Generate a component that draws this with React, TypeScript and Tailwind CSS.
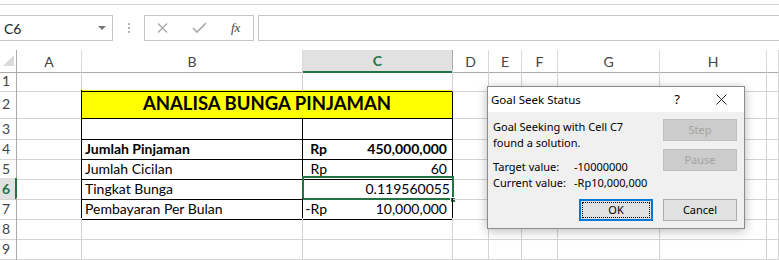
import React from "react";

const GRID =
  "grid grid-cols-[17px_65px_221px_150px_36px_33px_36px_102px_107px_1fr]";
const LETTERS = ["A", "B", "C", "D", "E", "F", "G", "H", ""];
const ROWS = [1, 2, 3, 4, 5, 6, 7, 8, 9, 10];

const sheetFont = { fontFamily: "Lato, 'Open Sans', sans-serif" };
const dlgFont = { fontFamily: "'Noto Sans', 'Open Sans', sans-serif" };

function FormulaBar() {
  return (
    <div className="pt-[4px] bg-white">
      <div className="h-[46px] border-t border-[#d4d4d4] pt-[10px] flex items-start">
        <div className="ml-[-1px] w-[114px] h-[26px] border border-[#c6c6c6] flex items-center pl-[4px] pr-[6px] text-[14px] text-[#222]" style={sheetFont}>
          <span className="flex-1">C6</span>
          <span className="w-0 h-0 border-l-[4px] border-r-[4px] border-t-[4px] border-l-transparent border-r-transparent border-t-[#777]" />
        </div>
        <div className="w-[31px] h-[26px] flex flex-col items-center justify-center gap-[2px]">
          <span className="w-[2px] h-[2px] bg-[#b5b5b5]" />
          <span className="w-[2px] h-[2px] bg-[#b5b5b5]" />
          <span className="w-[2px] h-[2px] bg-[#b5b5b5]" />
        </div>
        <div className="w-[110px] h-[26px] border border-[#c6c6c6] flex items-center">
          <svg width="110" height="24" viewBox="0 0 110 24">
            <path d="M13 7.5 L22 16.5 M22 7.5 L13 16.5" stroke="#a8a8a8" strokeWidth="1.3" fill="none" />
            <path d="M48 12 L52 16 L61 7" stroke="#a8a8a8" strokeWidth="1.6" fill="none" />
          </svg>
          <span className="-ml-[24px] text-[13px] italic text-[#444]" style={{ fontFamily: "'Liberation Serif', serif" }}>
            fx
          </span>
        </div>
        <div className="ml-[4px] flex-1 h-[26px] border border-[#c6c6c6] mr-[-2px]" />
      </div>
    </div>
  );
}

function HeaderRow() {
  return (
    <div className={`${GRID} h-[20px] text-[14px] text-[#444]`} style={sheetFont}>
      <div className="border-r border-b border-[#ababab] relative">
        <svg className="absolute left-[3px] top-[5px]" width="11" height="11" viewBox="0 0 11 11">
          <path d="M11 0 L11 11 L0 11 Z" fill="#dadada" />
        </svg>
      </div>
      {LETTERS.map((l, i) =>
        l === "C" ? (
          <div key={i} className="bg-[#e1e1e1] border-r border-[#ababab] border-b-2 border-b-[#217346] flex items-center justify-center font-bold text-[#217346]">
            C
          </div>
        ) : (
          <div key={i} className="border-r border-b border-r-[#dadada] border-b-[#ababab] flex items-center justify-center">
            {l}
          </div>
        )
      )}
    </div>
  );
}

function Cell({ r, c }: { r: number; c: number }) {
  const inTable = r >= 2 && r <= 7;
  let rb = "border-r-[#d4d4d4]";
  let bb = "border-b-[#d4d4d4]";
  if (c === 0 && inTable) rb = "border-r-black";
  if (c === 1 && r >= 3 && r <= 7) rb = "border-r-black";
  if (c === 2 && inTable) rb = "border-r-black";
  if ((c === 1 || c === 2) && r >= 1 && r <= 7) bb = "border-b-black";

  let content: React.ReactNode = null;
  const labels: Record<number, string> = {
    4: "Jumlah Pinjaman",
    5: "Jumlah Cicilan",
    6: "Tingkat Bunga",
    7: "Pembayaran Per Bulan",
  };
  if (c === 1 && labels[r]) {
    content = (
      <span className={`pl-[3px] ${r === 4 ? "font-bold" : ""}`}>{labels[r]}</span>
    );
  }
  if (c === 2 && r >= 4 && r <= 7) {
    if (r === 6) {
      content = <span className="ml-auto pr-[2px]">0.119560055</span>;
    } else {
      const vals: Record<number, [string, string]> = {
        4: ["Rp", "450,000,000"],
        5: ["Rp", "60"],
        7: ["-Rp", "10,000,000"],
      };
      content = (
        <>
          <span className="w-[24px] text-right">{vals[r][0]}</span>
          <span className="ml-auto pr-[5px]">{vals[r][1]}</span>
        </>
      );
      if (r === 4) content = <div className="flex w-full font-bold">{content}</div>;
    }
  }

  return (
    <div className={`relative border-r border-b ${rb} ${bb} flex items-center whitespace-nowrap overflow-visible`}>
      {content}
      {r === 6 && c === 2 && (
        <>
          <div className="absolute left-[-1px] top-[-2px] right-[-2px] bottom-[-1px] border-2 border-[#217346]" />
          <div className="absolute right-[-4px] bottom-[-4px] w-[6px] h-[6px] bg-[#217346] border border-white" />
        </>
      )}
    </div>
  );
}

function SheetRow({ r }: { r: number }) {
  const h = r === 2 ? "h-[28px]" : "h-[20px]";
  const sel = r === 6;
  return (
    <div className={`${GRID} ${h} text-[14px] text-black`} style={sheetFont}>
      <div
        className={`border-b border-[#d4d4d4] flex items-center pl-[2px] text-[14px] ${
          sel ? "bg-[#e1e1e1] border-r-2 border-r-[#217346] font-bold text-[#217346]" : "border-r border-r-[#ababab] text-[#444]"
        }`}
      >
        {r < 10 ? r : ""}
      </div>
      {r === 2 ? (
        <>
          <Cell r={2} c={0} />
          <div className="col-span-2 bg-[#ffff00] border-r border-b border-black flex items-center justify-center font-bold text-[18.5px]">
            ANALISA BUNGA PINJAMAN
          </div>
          {[3, 4, 5, 6, 7, 8].map((c) => (
            <Cell key={c} r={r} c={c} />
          ))}
        </>
      ) : (
        [0, 1, 2, 3, 4, 5, 6, 7, 8].map((c) => <Cell key={c} r={r} c={c} />)
      )}
    </div>
  );
}

function GoalSeekDialog() {
  return (
    <div
      className="absolute left-[487px] top-[86px] w-[258px] h-[143px] border border-[#8c8c8c] bg-[#f0f0f0] shadow-[0_2px_10px_rgba(0,0,0,0.28)] flex flex-col text-[11px] text-black"
      style={dlgFont}
    >
      <div className="h-[25px] bg-white flex items-center pl-[3px] text-[11.5px]">
        <span className="flex-1">Goal Seek Status</span>
        <span className="w-[20px] text-center text-[13px]">?</span>
        <svg className="ml-[29px] mr-[17px]" width="11" height="11" viewBox="0 0 11 11">
          <path d="M0.5 0.5 L10.5 10.5 M10.5 0.5 L0.5 10.5" stroke="#222" strokeWidth="1" fill="none" />
        </svg>
      </div>
      <div className="flex-1 flex flex-col pt-[7px] pl-[5px] pr-[7px] pb-[7px]">
        <div className="flex">
          <div className="flex-1 leading-[16px]">
            <p>Goal Seeking with Cell C7</p>
            <p>found a solution.</p>
            <div className="grid grid-cols-[81px_1fr] mt-[8px]">
              <span>Target value:</span>
              <span>-10000000</span>
              <span>Current value:</span>
              <span>-Rp10,000,000</span>
            </div>
          </div>
          <div className="w-[74px] flex flex-col gap-[8px]">
            <div className="h-[22px] bg-[#cccccc] border border-[#bfbfbf] flex items-center justify-center text-[#a3a3a3]">Step</div>
            <div className="h-[22px] bg-[#cccccc] border border-[#bfbfbf] flex items-center justify-center text-[#a3a3a3]">Pause</div>
          </div>
        </div>
        <div className="mt-auto flex justify-end gap-[10px]">
          <div className="w-[74px] h-[22px] bg-[#e1e1e1] border-2 border-[#0078d7] p-[1px]">
            <div className="w-full h-full border border-dotted border-black flex items-center justify-center">OK</div>
          </div>
          <div className="w-[74px] h-[22px] bg-[#e1e1e1] border border-[#adadad] flex items-center justify-center">Cancel</div>
        </div>
      </div>
    </div>
  );
}

export default function App() {
  return (
    <div className="relative w-[779px] h-[260px] overflow-hidden bg-white">
      <FormulaBar />
      <HeaderRow />
      {ROWS.map((r) => (
        <SheetRow key={r} r={r} />
      ))}
      <GoalSeekDialog />
    </div>
  );
}
